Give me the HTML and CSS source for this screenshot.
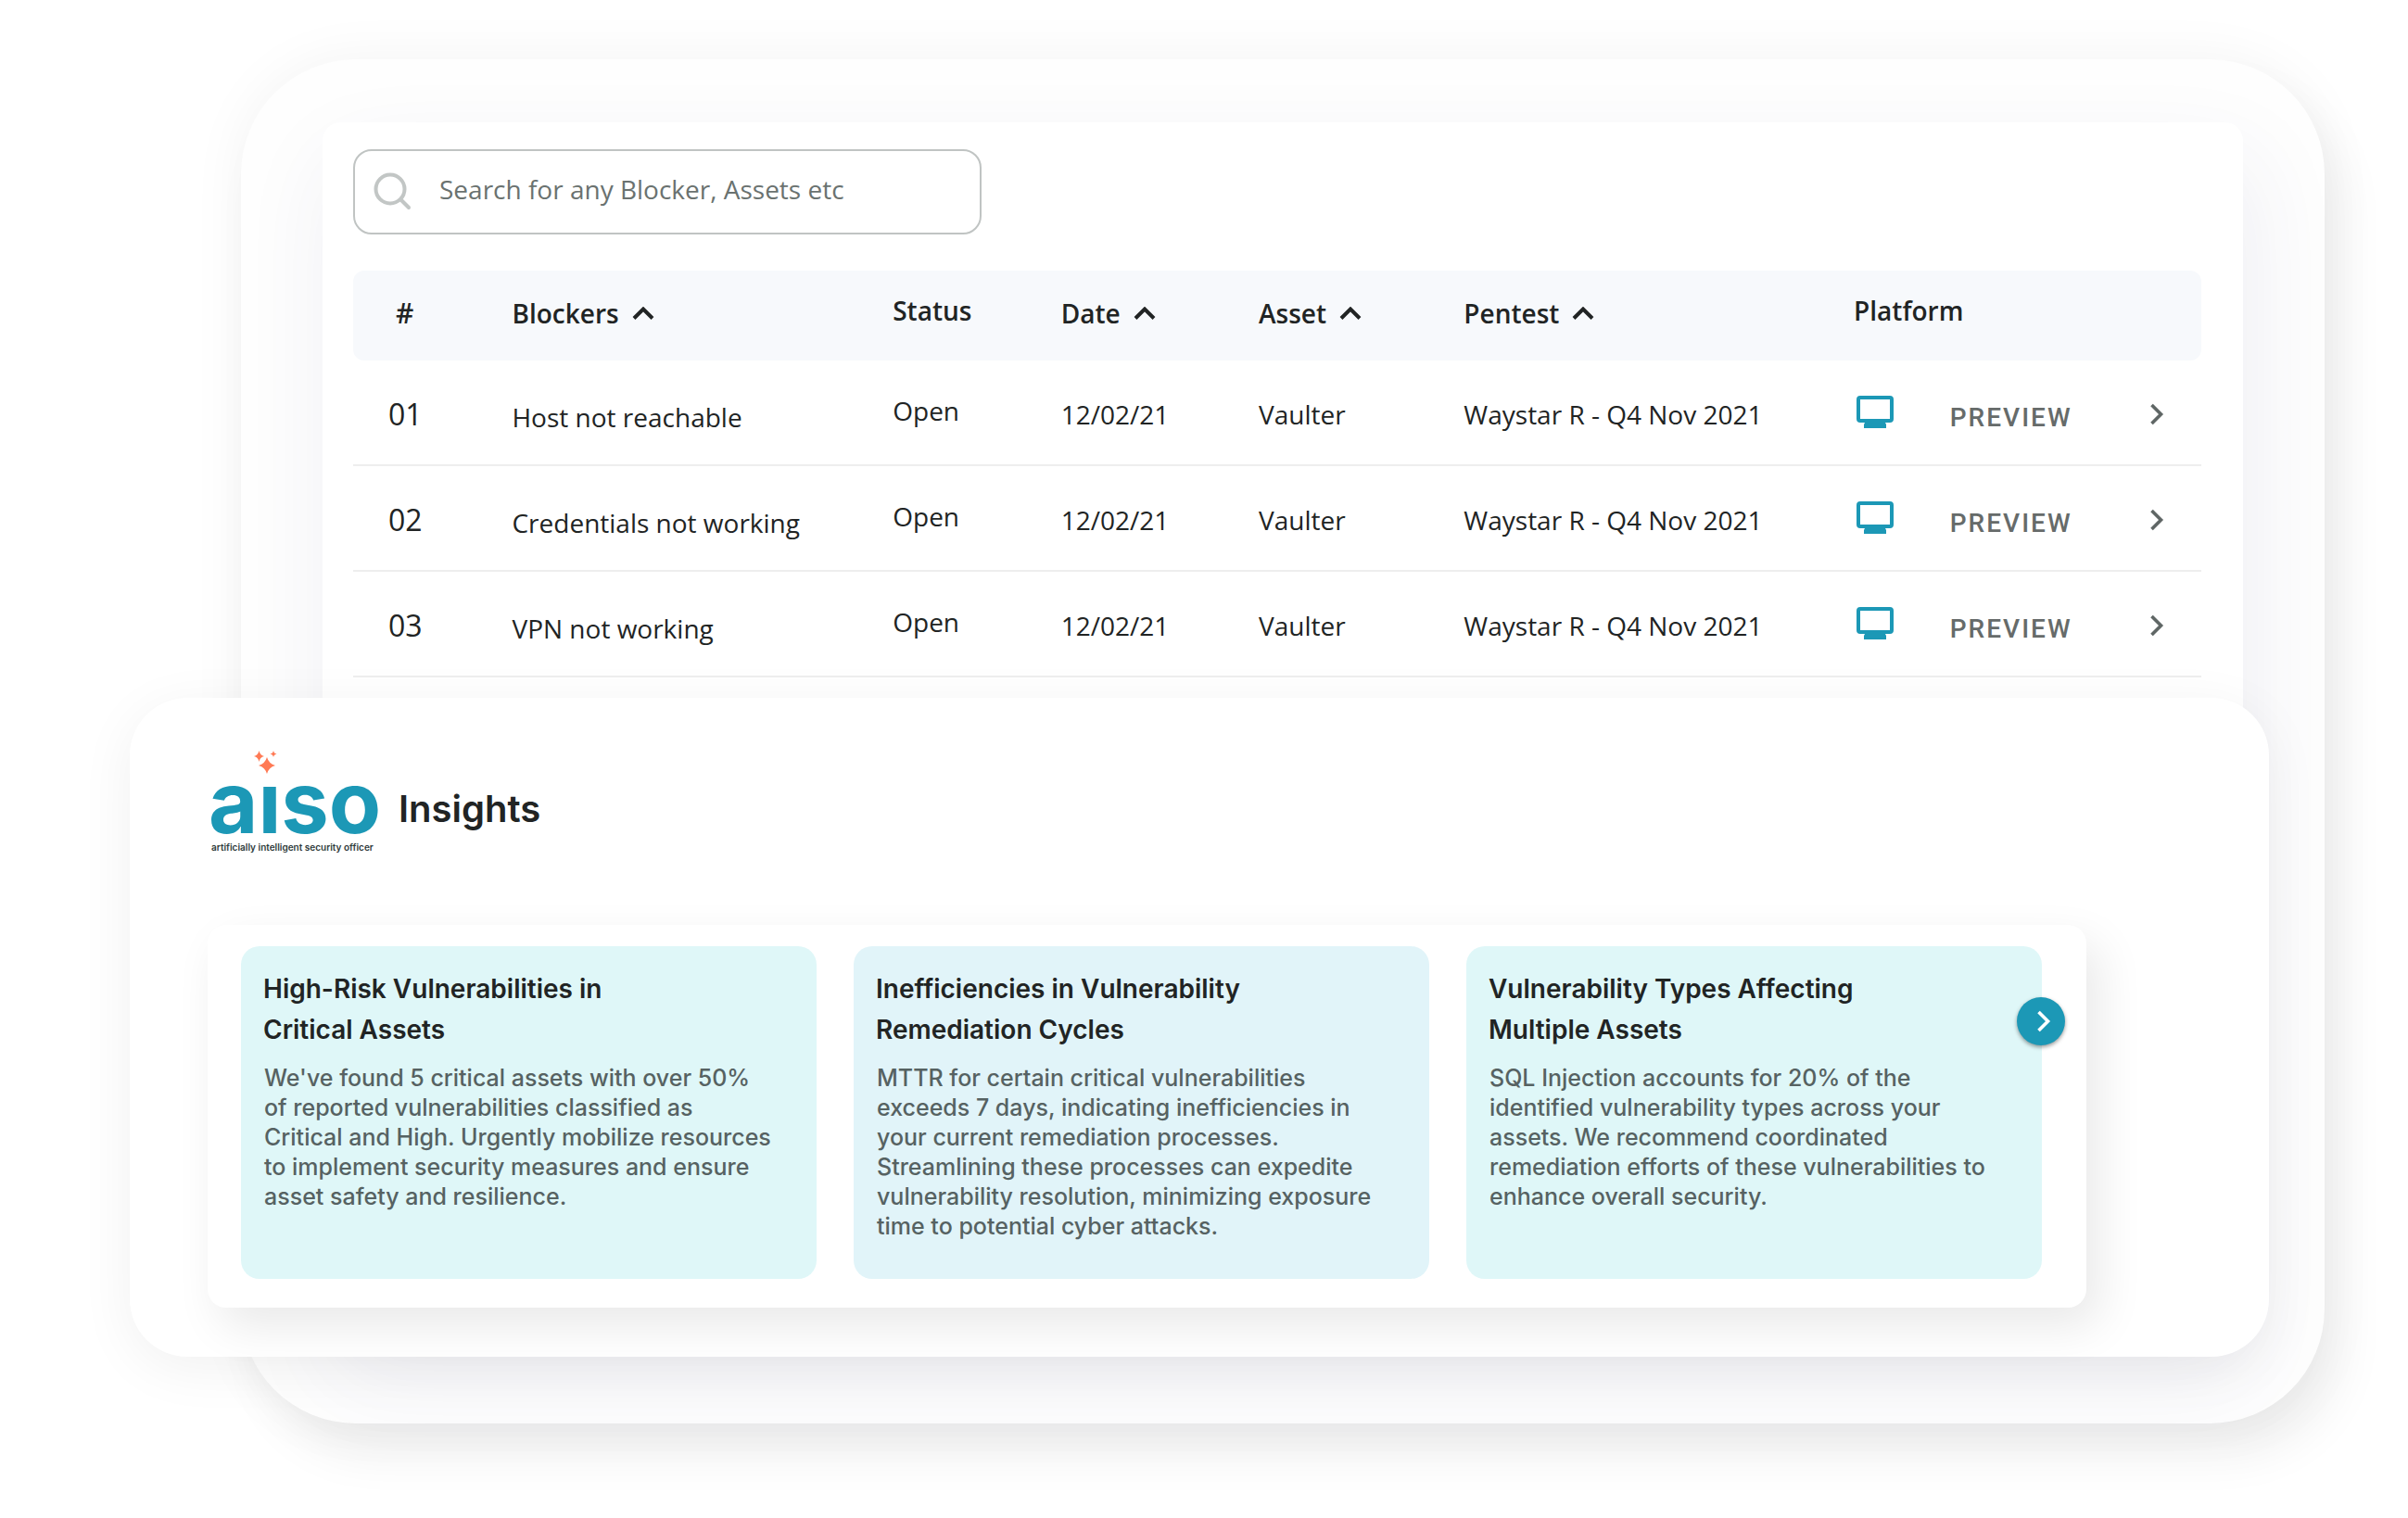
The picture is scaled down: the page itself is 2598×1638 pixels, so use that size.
FILE: index.html
```html
<!DOCTYPE html>
<html lang="en">
<head>
    <meta charset="UTF-8">
    <meta name="viewport" content="width=device-width, initial-scale=1.0">
    <title>Blockers &amp; Insights</title>
    <link rel="stylesheet" href="styles.css">
</head>
<body>
    <!-- shared icons -->
    <svg class="sprite" width="0" height="0" aria-hidden="true">
        <symbol id="icon-up" viewBox="0 0 24 14">
            <path d="M2 12.5 L12 2.5 L22 12.5" fill="none" stroke="currentColor" stroke-width="4"/>
        </symbol>
        <symbol id="icon-right" viewBox="0 0 16 24">
            <path d="M2.5 2 L12.5 12 L2.5 22" fill="none" stroke="currentColor" stroke-width="3.6"/>
        </symbol>
        <symbol id="icon-monitor" viewBox="0 0 40 36">
            <path fill="currentColor" fill-rule="evenodd" d="M4 0 H36 Q40 0 40 4 V25 Q40 29 36 29 H31 L32 31 V35 H8 V31 L9 29 H4 Q0 29 0 25 V4 Q0 0 4 0 Z M4 4 V25 H36 V4 Z"/>
        </symbol>
    </svg>

    <main class="stage">
        <section class="device">
            <div class="screen">
                <form class="search" role="search">
                    <label for="search" aria-label="Search">
                        <svg class="search-icon" viewBox="0 0 42 42">
                            <circle cx="18" cy="18" r="15.5"/>
                            <path d="M30 30 L38 38"/>
                        </svg>
                    </label>
                    <input type="text" id="search" placeholder="Search for any Blocker, Assets etc">
                </form>

                <table class="blockers">
                    <colgroup>
                        <col class="w-num"><col class="w-name"><col class="w-status"><col class="w-date"><col class="w-asset">
                        <col class="w-pentest"><col class="w-platform"><col class="w-preview"><col class="w-open">
                    </colgroup>
                    <thead>
                        <tr>
                            <th class="num">#</th>
                            <th><button type="button" class="sort">Blockers <svg><use href="#icon-up"/></svg></button></th>
                            <th class="plain">Status</th>
                            <th><button type="button" class="sort">Date <svg><use href="#icon-up"/></svg></button></th>
                            <th><button type="button" class="sort">Asset <svg><use href="#icon-up"/></svg></button></th>
                            <th><button type="button" class="sort">Pentest <svg><use href="#icon-up"/></svg></button></th>
                            <th class="plain" colspan="3">Platform</th>
                        </tr>
                    </thead>
                    <tbody>
                        <tr>
                            <td class="num">01</td>
                            <td class="name">Host not reachable</td>
                            <td class="status">Open</td>
                            <td>12/02/21</td>
                            <td>Vaulter</td>
                            <td>Waystar R - Q4 Nov 2021</td>
                            <td class="platform"><svg class="monitor"><use href="#icon-monitor"/></svg></td>
                            <td class="name"><button type="button" class="preview">PREVIEW</button></td>
                            <td><button type="button" class="open" aria-label="Open 01"><svg><use href="#icon-right"/></svg></button></td>
                        </tr>
                        <tr>
                            <td class="num">02</td>
                            <td class="name">Credentials not working</td>
                            <td class="status">Open</td>
                            <td>12/02/21</td>
                            <td>Vaulter</td>
                            <td>Waystar R - Q4 Nov 2021</td>
                            <td class="platform"><svg class="monitor"><use href="#icon-monitor"/></svg></td>
                            <td class="name"><button type="button" class="preview">PREVIEW</button></td>
                            <td><button type="button" class="open" aria-label="Open 02"><svg><use href="#icon-right"/></svg></button></td>
                        </tr>
                        <tr>
                            <td class="num">03</td>
                            <td class="name">VPN not working</td>
                            <td class="status">Open</td>
                            <td>12/02/21</td>
                            <td>Vaulter</td>
                            <td>Waystar R - Q4 Nov 2021</td>
                            <td class="platform"><svg class="monitor"><use href="#icon-monitor"/></svg></td>
                            <td class="name"><button type="button" class="preview">PREVIEW</button></td>
                            <td><button type="button" class="open" aria-label="Open 03"><svg><use href="#icon-right"/></svg></button></td>
                        </tr>
                    </tbody>
                </table>
            </div>
        </section>

        <section class="insights">
            <header class="insights-header">
                <svg class="logo" viewBox="0 0 176 128">
                    <text class="logo-word" x="-3" y="90">aiso</text>
                    <!-- the sparkles replace the dot of the i -->
                    <circle cx="62" cy="25" r="14" fill="#fff"/>
                    <g fill="#ff7a55">
                        <path d="M60 8 Q62 15 69 17 Q62 19 60 26 Q58 19 51 17 Q58 15 60 8 Z"/>
                        <path d="M51.500 1 Q52.500 6 57 7 Q52.500 8 51.500 13 Q50.500 8 46 7 Q50.500 6 51.500 1 Z"/>
                        <path d="M67 1 Q67.500 4 70.500 4.500 Q67.500 5 67 8 Q66.500 5 63.500 4.500 Q66.500 4 67 1 Z"/>
                    </g>
                    <text class="logo-tag" x="0" y="109">artificially intelligent security officer</text>
                </svg>
                <h1>Insights</h1>
            </header>

            <div class="carousel">
                <article class="card">
                    <h2>High-Risk Vulnerabilities in<br>Critical Assets</h2>
                    <p>We've found 5 critical assets with over 50%<br>of reported vulnerabilities classified as<br>Critical and High. Urgently mobilize resources<br>to implement security measures and ensure<br>asset safety and resilience.</p>
                </article>
                <article class="card card-blue">
                    <h2>Inefficiencies in Vulnerability<br>Remediation Cycles</h2>
                    <p>MTTR for certain critical vulnerabilities<br>exceeds 7 days, indicating inefficiencies in<br>your current remediation processes.<br>Streamlining these processes can expedite<br>vulnerability resolution, minimizing exposure<br>time to potential cyber attacks.</p>
                </article>
                <article class="card">
                    <h2>Vulnerability Types Affecting<br>Multiple Assets</h2>
                    <p>SQL Injection accounts for 20% of the<br>identified vulnerability types across your<br>assets. We recommend coordinated<br>remediation efforts of these vulnerabilities to<br>enhance overall security.</p>
                </article>
                <button type="button" class="next" aria-label="Next"><svg><use href="#icon-right"/></svg></button>
            </div>
        </section>
    </main>
</body>
</html>
```
FILE: styles.css
```css
* {
    margin: 0;
    padding: 0;
    box-sizing: border-box;
}
body {
    font-family: "Open Sans", "Noto Sans", sans-serif;
    color: #212424;
    background: #fff;
}
button {
    border: none;
    background: none;
    color: inherit;
    font: inherit;
    cursor: pointer;
}
svg {
    display: block;
}
.sprite {
    position: absolute;
}

/* both panels share one grid cell, the insights panel lies on top */
.stage {
    display: grid;
    grid-template-columns: minmax(0, 1fr);
    padding: 64px 90px 102px 140px;
}
.device {
    grid-area: 1 / 1;
    display: flex;
    margin-left: 120px;
    padding: 68px 88px 90px;
    border-radius: 124px;
    background: #fefefe;
    box-shadow: 0 0 60px rgba(0,0,0,0.05), 20px 36px 50px rgba(0,0,0,0.06);
}
.screen {
    flex: 1;
    min-width: 0;
    padding: 29px 45px 0 33px;
    border-radius: 20px;
    background: #fff;
    box-shadow: 10px 40px 100px rgba(50,50,110,0.08);
}

/* search */
.search {
    display: flex;
    align-items: center;
    width: 34%;
    height: 92px;
    padding: 0 20px;
    border: 2px solid #c0c4c3;
    border-radius: 20px;
}
.search-icon {
    width: 42px;
    height: 42px;
    fill: none;
    stroke: #c2c6c5;
    stroke-width: 4;
    stroke-linecap: round;
}
.search input {
    flex: 1;
    min-width: 0;
    margin-left: 29px;
    padding-bottom: 6px;
    border: none;
    outline: none;
    background: none;
    font-family: inherit;
    font-size: 28px;
    line-height: 40px;
    color: #212424;
}
.search input::placeholder {
    color: #6a7270;
    opacity: 1;
}

/* blockers table */
.blockers {
    width: 100%;
    margin-top: 39px;
    table-layout: fixed;
    border-collapse: separate;
    border-spacing: 0;
    font-size: 28px;
    line-height: 40px;
    text-align: left;
    white-space: nowrap;
}
.w-num { width: 8.6%; }
.w-name { width: 20.6%; }
.w-status { width: 9.1%; }
.w-date { width: 10.7%; }
.w-asset { width: 11.1%; }
.w-pentest { width: 21.1%; }
.w-platform { width: 5.2%; }
.w-preview { width: 10.7%; }
.blockers th {
    height: 97px;
    padding-bottom: 6px;
    background: #f7f9fc;
    font-weight: 600;
}
.blockers th:first-child {
    border-radius: 12px 0 0 12px;
}
.blockers th:last-child {
    border-radius: 0 12px 12px 0;
}
.blockers .plain {
    padding-bottom: 12px;
}
.blockers td {
    height: 114px;
    padding-top: 4px;
    border-bottom: 2px solid #eee;
}
.blockers .num {
    padding-left: 38px;
    font-size: 32px;
}
.blockers th.num {
    padding-left: 46px;
    font-size: 30px;
}
.blockers .name {
    padding-top: 10px;
}
.blockers .status {
    padding: 0 0 4px;
}
.blockers .platform {
    padding: 0 0 0 3px;
}
.sort {
    display: flex;
    align-items: center;
    gap: 14px;
}
.sort svg {
    width: 24px;
    height: 14px;
}
.monitor {
    width: 40px;
    height: 36px;
    color: #1c98b6;
}
.preview {
    color: #666b6a;
    font-family: "Roboto", sans-serif;
    font-size: 28px;
    font-weight: 500;
    letter-spacing: 2px;
}
.open {
    display: block;
    margin-left: 2px;
    color: #5f6665;
}
.open svg {
    width: 16px;
    height: 24px;
}

/* insights */
.insights {
    grid-area: 1 / 1;
    align-self: start;
    margin: 689px 60px 72px 0;
    padding: 56px 197px 53px 84px;
    border-radius: 62px;
    background: #fff;
    box-shadow: 0 12px 60px rgba(0,0,0,0.06);
    font-family: "Inter", "Liberation Sans", sans-serif;
}
.insights-header {
    display: flex;
    align-items: center;
    gap: 26px;
    padding-left: 4px;
    margin-bottom: 61px;
}
.insights-header h1 {
    font-size: 40px;
    font-weight: 600;
    line-height: 48px;
}
.logo {
    width: 176px;
    height: 128px;
    overflow: visible;
}
.logo-word {
    font-size: 92px;
    font-weight: 700;
    fill: #1c98b6;
}
.logo-tag {
    font-size: 10px;
    font-weight: 600;
    fill: #2f3b3b;
}
.carousel {
    position: relative;
    display: grid;
    grid-template-columns: repeat(3, minmax(0, 1fr));
    gap: 40px;
    padding: 23px 48px 31px 36px;
    border-radius: 20px;
    background: #fff;
    box-shadow: 14px 20px 50px rgba(0,0,0,0.09);
}
.card {
    padding: 24px 24px 41px;
    border-radius: 20px;
    background: #dff7f8;
}
.card-blue {
    background: #e1f4f9;
}
.card h2 {
    font-size: 28px;
    font-weight: 600;
    line-height: 44px;
    white-space: nowrap;
}
.card p {
    margin-top: 14px;
    padding-left: 1px;
    color: #566262;
    font-size: 25px;
    font-weight: 500;
    line-height: 32px;
    white-space: nowrap;
}
.next {
    position: absolute;
    top: 78px;
    right: 23px;
    display: flex;
    align-items: center;
    justify-content: center;
    width: 52px;
    height: 52px;
    padding-left: 6px;
    border-radius: 50%;
    background: #1c98b6;
    color: #fff;
    box-shadow: 0 2px 4px rgba(0,0,0,0.4);
}
.next svg {
    width: 16px;
    height: 24px;
}
```
